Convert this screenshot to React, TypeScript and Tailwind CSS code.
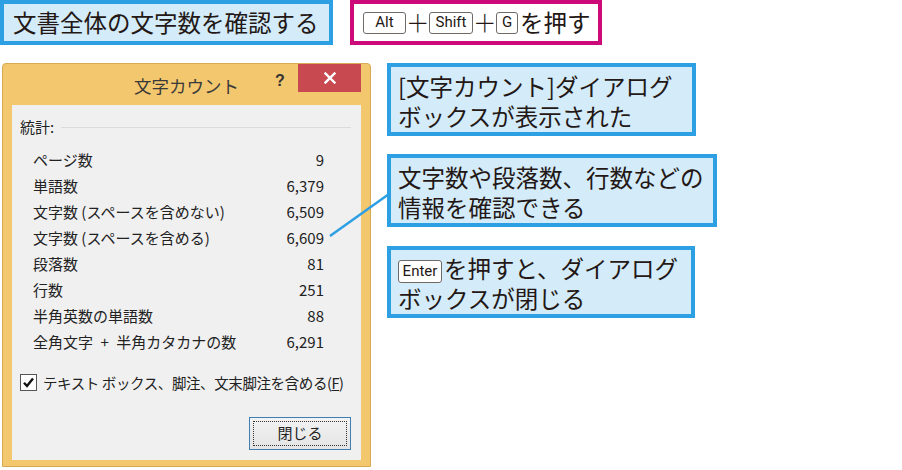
const jp = "font-['Noto_Sans_CJK_JP',sans-serif]"

const stats: [string, string][] = [
  ['ページ数', '9'],
  ['単語数', '6,379'],
  ['文字数 (スペースを含めない)', '6,509'],
  ['文字数 (スペースを含める)', '6,609'],
  ['段落数', '81'],
  ['行数', '251'],
  ['半角英数の単語数', '88'],
  ['全角文字\u2002+\u2002半角カタカナの数', '6,291'],
]

function Key({ label, width, height = 22 }: { label: string; width: number; height?: number }) {
  return (
    <span
      className="inline-flex items-center justify-center border border-[#6f6a66] rounded-[3px] bg-white text-[15px] leading-none text-[#231815] font-['Roboto',sans-serif] align-middle"
      style={{ width, height }}
    >
      {label}
    </span>
  )
}

function Callout({ className, children }: { className: string; children: React.ReactNode }) {
  return (
    <div
      className={`border-4 border-[#2d9fe3] bg-[#d4ebf9] pl-[7px] text-[23.5px] leading-[30px] text-[#231815] ${className}`}
    >
      {children}
    </div>
  )
}

function WordCountDialog() {
  return (
    <div className="ml-[2px] w-[369px] h-[404px] border border-[#d6aa52] bg-[#f3c76d] rounded-t-[4px] flex flex-col">
      {/* title bar */}
      <div className="h-[41px] flex">
        <div className="w-[100px] shrink-0" />
        <div className="flex-1 flex items-center justify-center pt-[3px] text-[17.5px] leading-none text-[#3a3a3a]">
          文字カウント
        </div>
        <div className="w-[100px] shrink-0 flex items-start">
          <div className="w-[20px] mt-[5px] text-center text-[16px] font-bold font-['Liberation_Sans',sans-serif] text-[#333]">
            ?
          </div>
          <button className="ml-[8px] w-[63px] h-[28px] bg-[#c84a50] flex items-center justify-center">
            <svg width="12" height="12" viewBox="0 0 12 12">
              <path d="M1.5 1.5 L10.5 10.5 M10.5 1.5 L1.5 10.5" stroke="#fff" strokeWidth="2.4" strokeLinecap="square" />
            </svg>
          </button>
        </div>
      </div>

      {/* body */}
      <div className="ml-[9px] mr-[9px] h-[355px] bg-[#f0f0f0] pl-[8px] pt-[9px] text-[15px] text-[#222]">
        <div className="h-[26px] flex items-center">
          <span>統計:</span>
          <div className="flex-1 h-px bg-[#d8dcdf] ml-[7px] mr-[10px]" />
        </div>
        <div className="mt-[7px] pl-[13px] pr-[37px]">
          {stats.map(([label, value]) => (
            <div key={label} className="h-[26px] flex items-center justify-between">
              <span className="whitespace-pre">{label}</span>
              <span>{value}</span>
            </div>
          ))}
        </div>

        <div className="mt-[17px] flex items-center">
          <div className="w-[17px] h-[17px] border border-[#555] bg-white flex items-center justify-center">
            <svg width="13" height="13" viewBox="0 0 13 13">
              <path d="M2 6.8 L5 10 L11 2.5" fill="none" stroke="#111" strokeWidth="2.4" />
            </svg>
          </div>
          <span className="ml-[6px] whitespace-nowrap text-[14.5px] tracking-[-0.4px]">
            テキスト ボックス、脚注、文末脚注を含める(<span className="underline">F</span>)
          </span>
        </div>

        <div className="mt-[23px] flex justify-end pr-[10px]">
          <button className="w-[102px] h-[33px] border border-[#3d7fb5] bg-gradient-to-b from-[#f3f3f3] to-[#e4e4e4] p-[3px]">
            <div className="h-full border border-dotted border-[#333] flex items-center justify-center text-[15px] text-[#222]">
              閉じる
            </div>
          </button>
        </div>
      </div>
    </div>
  )
}

export default function App() {
  return (
    <div className={`relative w-[902px] h-[470px] bg-white overflow-hidden ${jp}`}>
      <div className="flex items-start">
        <div className="w-[333px] h-[45px] border-4 border-[#2d9fe3] bg-[#d4ebf9] flex items-center pl-[9px] text-[23.5px] leading-none text-[#231815] whitespace-nowrap">
          文書全体の文字数を確認する
        </div>
        <div className="ml-[17px] w-[252px] h-[45px] border-4 border-[#cc0a7a] bg-white flex items-center pl-[9px] text-[23.5px] leading-none text-[#231815] whitespace-nowrap">
          <Key label="Alt" width={43} />
          <span className="w-[23px] text-center font-light">＋</span>
          <Key label="Shift" width={44} />
          <span className="w-[23px] text-center font-light">＋</span>
          <Key label="G" width={22} />
          <span className="ml-[2px]">を押す</span>
        </div>
      </div>

      <div className="mt-[18px] flex items-start">
        <WordCountDialog />

        <div className="ml-[16px] flex flex-col">
          <Callout className="w-[309px] h-[73px] pt-[4px]">
            [文字カウント]ダイアログ
            <br />
            ボックスが表示された
          </Callout>
          <Callout className="mt-[18px] w-[330px] h-[73px] pt-[4px]">
            文字数や段落数、行数などの
            <br />
            情報を確認できる
          </Callout>
          <Callout className="mt-[19px] w-[308px] h-[72px] pt-[3px]">
            <span className="whitespace-nowrap">
              <span className="mr-[2px]">
                <Key label="Enter" width={44} height={23} />
              </span>
              を押すと、ダイアログ
            </span>
            <br />
            ボックスが閉じる
          </Callout>
        </div>
      </div>

      {/* leader from the 6,609 row to its note */}
      <svg className="absolute inset-0 pointer-events-none" width="902" height="470">
        <line x1="330" y1="236" x2="389" y2="194" stroke="#2d9fe3" strokeWidth="2.5" />
      </svg>
    </div>
  )
}
